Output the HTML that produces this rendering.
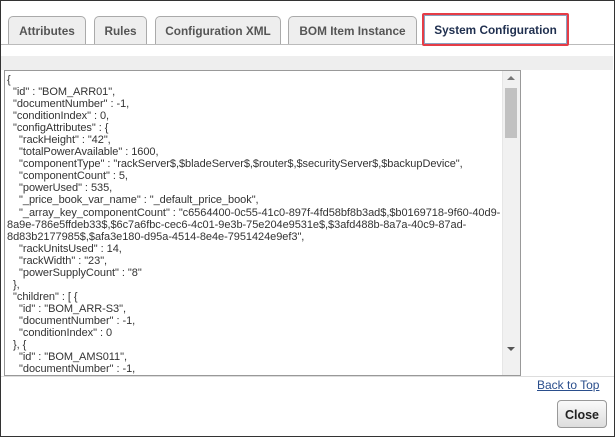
<!DOCTYPE html>
<html><head><style>
html,body{margin:0;padding:0;}
body{width:615px;height:437px;position:relative;overflow:hidden;background:#fff;font-family:"Liberation Sans",Arial,sans-serif;}
.frame{position:absolute;left:0;top:0;width:613px;height:435px;border:1px solid #333;}
.tab{position:absolute;top:16px;height:28px;border:1px solid #aaa;border-bottom:none;border-radius:5px 5px 0 0;background:#eee;color:#555;font-weight:bold;font-size:11.8px;line-height:28px;text-align:center;box-sizing:border-box;}
.line{position:absolute;left:1px;right:1px;top:44px;height:1px;background:#bbb;}
.band{position:absolute;left:1px;top:56px;width:612px;height:14px;background:#eee;}
.ta{position:absolute;left:4px;top:70px;width:517px;height:306px;border:1px solid #999;box-sizing:border-box;overflow:hidden;background:#fff;}
pre{margin:0;padding:3px 0 0 2px;font-family:"Liberation Sans",Arial,sans-serif;font-size:11px;line-height:12.05px;color:#333;letter-spacing:-0.05px;white-space:pre;}
.sb{position:absolute;right:0;top:0;width:17px;height:304px;background:#f1f1f1;border-left:1px solid #e6e6e6;}
.thumb{position:absolute;left:2px;top:17px;width:12px;height:50px;background:#c1c1c1;}
.bottomline{position:absolute;left:1px;right:1px;top:376px;height:1px;background:#ddd;}
a{position:absolute;left:537px;top:378px;font-size:12px;color:#2a4e8c;text-decoration:underline;}
.btn{position:absolute;left:557px;top:400px;width:50px;height:28px;border:1px solid #999;border-radius:4px;background:linear-gradient(#fafafa,#ddd);font-weight:bold;font-size:12.5px;line-height:28px;text-align:center;color:#222;box-sizing:border-box;}
</style></head><body>
<div class="frame"></div>
<div class="line"></div>
<div class="tab" style="left:8px;width:78px;">Attributes</div>
<div class="tab" style="left:94px;width:53px;">Rules</div>
<div class="tab" style="left:155px;width:126px;">Configuration XML</div>
<div class="tab" style="left:288px;width:129px;">BOM Item Instance</div>
<div class="tab" style="left:422px;top:13px;height:33px;width:147px;border:2px solid #e53c46;border-radius:2px;background:#fff;color:#1f2f4f;line-height:30px;box-shadow:inset 0 0 0 1px #8aa0c0;">System Configuration</div>
<div class="band"></div>
<div class="ta"><pre>{
  "id" : "BOM_ARR01",
  "documentNumber" : -1,
  "conditionIndex" : 0,
  "configAttributes" : {
    "rackHeight" : "42",
    "totalPowerAvailable" : 1600,
    "componentType" : "rackServer$,$bladeServer$,$router$,$securityServer$,$backupDevice",
    "componentCount" : 5,
    "powerUsed" : 535,
    "_price_book_var_name" : "_default_price_book",
    "_array_key_componentCount" : "c6564400-0c55-41c0-897f-4fd58bf8b3ad$,$b0169718-9f60-40d9-
8a9e-786e5ffdeb33$,$6c7a6fbc-cec6-4c01-9e3b-75e204e9531e$,$3afd488b-8a7a-40c9-87ad-
8d83b2177985$,$afa3e180-d95a-4514-8e4e-7951424e9ef3",
    "rackUnitsUsed" : 14,
    "rackWidth" : "23",
    "powerSupplyCount" : "8"
  },
  "children" : [ {
    "id" : "BOM_ARR-S3",
    "documentNumber" : -1,
    "conditionIndex" : 0
  }, {
    "id" : "BOM_AMS011",
    "documentNumber" : -1,</pre>
<div class="sb"><div style="position:absolute;left:4px;top:5px;border:4px solid transparent;border-bottom:4px solid #777;border-top:none;"></div><div class="thumb"></div><div style="position:absolute;left:4px;top:276px;border:4px solid transparent;border-top:4px solid #555;border-bottom:none;"></div></div>
</div>
<div class="bottomline"></div>
<a>Back to Top</a>
<div class="btn">Close</div>
</body></html>
